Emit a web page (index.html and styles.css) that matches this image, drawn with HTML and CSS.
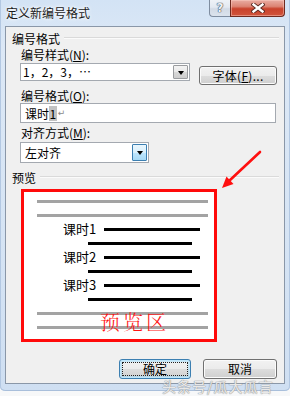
FILE: index.html
```html
<!DOCTYPE html>
<html lang="zh-CN">
<head>
<meta charset="utf-8">
<title>定义新编号格式</title>
<link rel="stylesheet" href="styles.css">
</head>
<body>
<div class="window">
  <div class="titlebar">
    <span class="title">定义新编号格式</span>
    <div class="caption">
      <span class="cbtn help">?</span>
      <span class="cbtn close">
        <svg width="14" height="10" viewBox="0 0 14 10">
          <path d="M2.5 1.5 L11.5 8.5 M11.5 1.5 L2.5 8.5" stroke="#5a2a22" stroke-width="4.2" stroke-linecap="square"/>
          <path d="M2.5 1.5 L11.5 8.5 M11.5 1.5 L2.5 8.5" stroke="#ffffff" stroke-width="2.4" stroke-linecap="square"/>
        </svg>
      </span>
    </div>
  </div>
  <div class="client">
    <div class="group-head"><span>编号格式</span><i class="rule"></i></div>
    <div class="group-body">
      <div class="label l1">编号样式(<u>N</u>):</div>
      <div class="row1">
        <div class="combo style-combo"><span class="val">1，2，3，…</span><span class="drop"><i class="tri"></i></span></div>
        <div class="btn font-btn">字体(<u>F</u>)...</div>
      </div>
      <div class="label l2">编号格式(<u>O</u>):</div>
      <div class="textbox">课时<span class="hl">1</span><span class="pm">↵</span></div>
      <div class="label l3">对齐方式(<u>M</u>):</div>
      <div class="combo align-combo"><span class="val">左对齐</span><span class="drop hot"><i class="tri"></i></span></div>
    </div>
    <div class="group-head preview-head"><span>预览</span><i class="rule"></i></div>
    <div class="preview">
      <div class="prow"><i class="gline"></i></div>
      <div class="prow"><i class="gline"></i></div>
      <div class="prow"><span class="ptext">课时1</span><i class="bline"></i></div>
      <div class="prow"><i class="iline"></i></div>
      <div class="prow"><span class="ptext">课时2</span><i class="bline"></i></div>
      <div class="prow"><i class="iline"></i></div>
      <div class="prow"><span class="ptext">课时3</span><i class="bline"></i></div>
      <div class="prow"><i class="iline"></i></div>
      <div class="prow"><i class="gline"></i></div>
      <div class="prow"><i class="gline"></i></div>
      <span class="stamp">预览区</span>
    </div>
    <div class="buttons">
      <div class="btn default ok"><span class="focus">确定</span></div>
      <div class="btn cancel">取消</div>
    </div>
  </div>
  <svg class="pointer" width="50" height="50" viewBox="0 0 50 50">
    <path d="M45 7 L14 36" stroke="#ff1010" stroke-width="2.6" stroke-linecap="round"/>
    <polygon points="7,43 18.5,39 11.5,31.5" fill="#ff1010"/>
  </svg>
  <div class="watermark">头条号/瓜大瓜言</div>
</div>
</body>
</html>
```

FILE: styles.css
```css
* { box-sizing: border-box; }
html, body { margin: 0; padding: 0; }
body {
  width: 290px;
  height: 396px;
  overflow: hidden;
  background: #f7f8f9;
  font-family: "Noto Sans CJK SC", "Liberation Sans", sans-serif;
  font-size: 12px;
  color: #000;
}
.window {
  position: relative;
  width: 290px;
  height: 391px;
  padding: 0 5px 7px 5px;
  display: flex;
  flex-direction: column;
  background: linear-gradient(180deg, #d3e3f5 0%, #dce8f6 12%, #d6e4f4 60%, #cfdff2 100%);
  border-radius: 0 0 5px 5px;
  box-shadow: inset 1px 0 0 #b3c8e2, inset -1px 0 0 #b3c8e2, inset 0 -1px 0 #a9bfdb;
}
.titlebar {
  height: 26px;
  display: flex;
  justify-content: space-between;
  align-items: flex-start;
  flex: none;
}
.title {
  margin: 6px 0 0 1px;
  line-height: 14px;
  font-size: 12px;
  color: #1a1a1a;
  text-shadow: 0 0 5px #fff, 0 0 3px #fff;
}
.caption { display: flex; }
.cbtn {
  height: 17px;
  display: flex;
  align-items: center;
  justify-content: center;
  border: 1px solid;
  border-top: 0;
  border-radius: 0 0 4px 4px;
}
.help {
  width: 21px;
  border-color: #7f8da0;
  border-right: 0;
  border-radius: 0 0 0 4px;
  background: linear-gradient(180deg, #eef2f7 0%, #e3e9f1 45%, #d2dae5 55%, #dbe3ed 100%);
  font-family: "DejaVu Sans", sans-serif;
  font-weight: bold;
  font-size: 12px;
  line-height: 14px;
  color: #eef1f5;
  text-shadow: 0 0 1px #3d4a5c, 0 0 1px #3d4a5c, 0 0 1px #3d4a5c;
}
.close {
  width: 55px;
  border-color: #6e2a20;
  border-radius: 0 0 4px 0;
  background: linear-gradient(180deg, #e9ada3 0%, #dc8474 40%, #c9422c 55%, #d0553d 100%);
  box-shadow: inset 0 0 0 1px rgba(255, 210, 200, 0.45);
}
.client {
  flex: 1;
  background: #f0f0f0;
  border: 1px solid #8a97a8;
  display: flex;
  flex-direction: column;
}
.group-head {
  display: flex;
  align-items: center;
  margin-top: 5px;
  padding-left: 6px;
  padding-right: 5px;
  line-height: 14px;
  height: 14px;
  color: #000;
}
.rule {
  flex: 1;
  height: 2px;
  margin-left: 4px;
  margin-top: -3px;
  border-top: 1px solid #dadada;
  border-bottom: 1px solid #fbfbfb;
}
.group-body {
  padding-left: 14px;
  display: flex;
  flex-direction: column;
  align-items: flex-start;
}
.label { line-height: 14px; height: 14px; padding-left: 1px; }
.label u { text-underline-offset: 1px; }
.l1 { margin-top: 2px; }
.l2 { margin-top: 4px; }
.l3 { margin-top: 3px; }
.row1 {
  margin-top: 1px;
  display: flex;
  align-items: flex-start;
  height: 22px;
}
.combo {
  display: flex;
  align-items: center;
  justify-content: space-between;
  background: #fff;
  border: 1px solid #a4a9b0;
  padding: 1px 1px 1px 2px;
}
.style-combo { width: 170px; height: 18px; }
.val { line-height: 14px; }
.drop {
  width: 15px;
  height: 100%;
  border: 1px solid #9a9c9f;
  border-radius: 1px;
  background: linear-gradient(180deg, #f4f4f4 0%, #e8e8e8 50%, #d8d8d8 51%, #cdcdcd 100%);
  display: flex;
  align-items: center;
  justify-content: center;
}
.drop.hot {
  border-color: #3c7fb1;
  background: linear-gradient(180deg, #eaf6fd 0%, #d9f0fc 50%, #bee6fd 51%, #a7d9f5 100%);
}
.tri {
  width: 0;
  height: 0;
  border-left: 3.5px solid transparent;
  border-right: 3.5px solid transparent;
  border-top: 4px solid #000;
  margin-top: 1px;
}
.btn {
  height: 20px;
  display: flex;
  align-items: center;
  justify-content: center;
  border: 1px solid #707070;
  border-radius: 3px;
  background: linear-gradient(180deg, #f2f2f2 0%, #ebebeb 50%, #dddddd 51%, #cfcfcf 100%);
  box-shadow: inset 0 0 0 1px #fbfbfb;
  line-height: 14px;
  color: #000;
}
.font-btn {
  width: 78px;
  height: 19px;
  margin-left: 9px;
  margin-top: 3px;
  letter-spacing: 0.3px;
}
.textbox {
  width: 256px;
  height: 20px;
  background: #fff;
  border: 1px solid #a4a9b0;
  padding: 2px 4px;
  line-height: 15px;
  display: flex;
  align-items: center;
}
.hl { background: #c2c2c2; padding: 0 0.5px; line-height: 15px; }
.pm { color: #8a8a8a; font-size: 9px; margin-left: 1px; line-height: 15px; font-family: "DejaVu Sans", sans-serif; }
.align-combo {
  width: 129px;
  height: 21px;
  margin-top: 2px;
  padding-left: 4px;
}
.preview-head { margin-top: 8px; }
.preview {
  position: relative;
  margin-top: 4px;
  margin-left: 15px;
  width: 196px;
  height: 153px;
  background: #fff;
  border: 3px solid #ff0a0a;
  padding-top: 2px;
  display: flex;
  flex-direction: column;
}
.prow {
  height: 14px;
  display: flex;
  align-items: center;
  flex: none;
}
.gline {
  display: block;
  margin-left: 13px;
  width: 171px;
  height: 3px;
  background: #a3a3a3;
}
.ptext {
  margin-left: 39px;
  width: 41px;
  font-size: 13px;
  line-height: 14px;
  color: #000;
}
.bline {
  display: block;
  width: 96px;
  height: 3px;
  background: #000;
}
.iline {
  display: block;
  margin-left: 64px;
  width: 104px;
  height: 3px;
  background: #000;
}
.stamp {
  position: absolute;
  left: 76px;
  top: 118px;
  font-family: "Noto Serif CJK SC", "Noto Sans CJK SC", serif;
  font-size: 20px;
  line-height: 24px;
  letter-spacing: 3px;
  color: #ff1414;
  font-weight: 300;
}
.buttons {
  margin-top: 17px;
  display: flex;
  justify-content: flex-end;
  gap: 12px;
  padding-right: 7px;
}
.ok {
  width: 72px;
  border-color: #3c7fb1;
  box-shadow: inset 0 0 0 1px #bfe6fb, inset 0 0 0 2px rgba(160, 220, 250, 0.5);
  padding: 2px;
}
.focus {
  flex: 1;
  align-self: stretch;
  display: flex;
  align-items: center;
  justify-content: center;
  border: 1px dotted #222;
}
.cancel { width: 74px; }
.pointer {
  position: absolute;
  left: 215px;
  top: 145px;
}
.watermark {
  position: absolute;
  left: 162px;
  top: 380px;
  font-size: 14px;
  line-height: 12px;
  letter-spacing: 1px;
  color: rgba(255, 255, 255, 0.8);
  text-shadow: 0 0 1px #9a9a9a, 0 0 1px #9a9a9a, 0 0 1px #aaaaaa;
}
```
